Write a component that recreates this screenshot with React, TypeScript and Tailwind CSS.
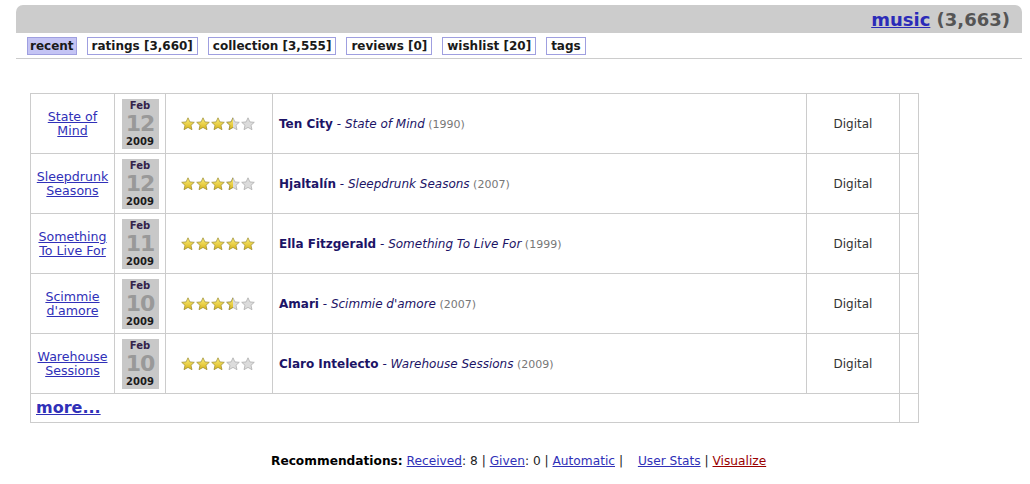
import React from 'react';

type Row = {
  title: string[];
  day: string;
  rating: number;
  artist: string;
  album: string;
  year: string;
};

const rows: Row[] = [
  { title: ['State of', 'Mind'], day: '12', rating: 3.5, artist: 'Ten City', album: 'State of Mind', year: '1990' },
  { title: ['Sleepdrunk', 'Seasons'], day: '12', rating: 3.5, artist: 'Hjaltalín', album: 'Sleepdrunk Seasons', year: '2007' },
  { title: ['Something', 'To Live For'], day: '11', rating: 5, artist: 'Ella Fitzgerald', album: 'Something To Live For', year: '1999' },
  { title: ['Scimmie', "d'amore"], day: '10', rating: 3.5, artist: 'Amari', album: "Scimmie d'amore", year: '2007' },
  { title: ['Warehouse', 'Sessions'], day: '10', rating: 3, artist: 'Claro Intelecto', album: 'Warehouse Sessions', year: '2009' },
];

const tabs = ['recent', 'ratings [3,660]', 'collection [3,555]', 'reviews [0]', 'wishlist [20]', 'tags'];

const STAR = 'M7 0.8 L8.9 4.9 L13.3 5.3 L10 8.3 L11 12.7 L7 10.4 L3 12.7 L4 8.3 L0.7 5.3 L5.1 4.9 Z';

const Star: React.FC<{ fill: 'full' | 'half' | 'empty'; id: string }> = ({ fill, id }) => (
  <svg width="14" height="14" viewBox="0 0 14 14" className="block">
    <defs>
      <linearGradient id={`g-${id}`} x1="0" y1="0" x2="0" y2="1">
        <stop offset="0" stopColor="#fff27a" />
        <stop offset="1" stopColor="#d6b21c" />
      </linearGradient>
      <clipPath id={`c-${id}`}>
        <rect x="0" y="0" width="7" height="14" />
      </clipPath>
    </defs>
    {fill === 'full' ? (
      <path d={STAR} fill={`url(#g-${id})`} stroke="#9a8a2a" strokeWidth="0.7" />
    ) : (
      <>
        <path d={STAR} fill="#dcdcdc" stroke="#a8a8a8" strokeWidth="0.7" />
        {fill === 'half' && (
          <path d={STAR} fill={`url(#g-${id})`} stroke="#9a8a2a" strokeWidth="0.7" clipPath={`url(#c-${id})`} />
        )}
      </>
    )}
  </svg>
);

const Stars: React.FC<{ rating: number; row: number }> = ({ rating, row }) => (
  <div className="flex gap-[1px]">
    {[0, 1, 2, 3, 4].map((i) => {
      const f = rating >= i + 1 ? 'full' : rating >= i + 0.5 ? 'half' : 'empty';
      return <Star key={i} fill={f} id={`${row}-${i}`} />;
    })}
  </div>
);

const App: React.FC = () => {
  return (
    <div className="w-[1030px] h-[484px] bg-white text-[12px] text-[#222]" style={{ fontFamily: '"DejaVu Sans", Verdana, sans-serif' }}>
      {/* header bar */}
      <div className="pt-[5px] pl-[16px] pr-[8px]">
        <div className="h-[28px] bg-[#cccccc] rounded-t-[7px] flex items-end justify-end pr-[12px] pb-[2px]">
          <span className="text-[18px] font-bold text-[#555] leading-[22px]">
            <a href="#" className="text-[#2b2bb8] underline">music</a> (3,663)
          </span>
        </div>
        <div className="flex gap-[10px] pl-[11px] pt-[4px] pb-[3px] border-b border-[#cccccc]">
          {tabs.map((t, i) => (
            <span
              key={t}
              className={`border border-[#9f9fe0] h-[18px] leading-[16px] font-bold text-[12px] text-[#1a1a1a] ${i === 0 ? 'bg-[#c4c4f4] px-[2px]' : 'bg-white px-[4px]'}`}
            >
              {t}
            </span>
          ))}
        </div>
      </div>

      {/* recent table */}
      <div className="pl-[30px] pt-[34px]">
        <table className="w-[889px] border-collapse border border-[#cccccc]">
          <tbody>
            {rows.map((r, idx) => (
              <tr key={idx} className="h-[60px]">
                <td className="w-[84px] border border-[#cccccc] text-center align-middle leading-[14px] text-[12.6px]">
                  <a href="#" className="text-[#3030b8] underline">
                    {r.title[0]}
                    <br />
                    {r.title[1]}
                  </a>
                </td>
                <td className="w-[51px] border border-[#cccccc] align-middle">
                  <div className="mx-auto w-[37px] h-[50px] bg-[#c8c8c8] flex flex-col items-center justify-start pt-[1px]">
                    <span className="text-[10px] font-bold text-[#33224a] leading-[12px]">Feb</span>
                    <span className="text-[22px] font-bold text-[#999999] leading-[24px] tracking-[-1px]">{r.day}</span>
                    <span className="text-[10px] text-[#1a1a1a] leading-[12px] font-bold">2009</span>
                  </div>
                </td>
                <td className="w-[107px] border border-[#cccccc] align-middle pl-[15px]">
                  <Stars rating={r.rating} row={idx} />
                </td>
                <td className="w-[534px] border border-[#cccccc] align-middle pl-[6px] pt-[2px]">
                  <span className="font-bold text-[#1c1466]">{r.artist}</span>
                  <span className="text-[#1c1466]"> - </span>
                  <i className="text-[#1c1466]">{r.album}</i>
                  <span className="text-[11px] text-[#777]"> ({r.year})</span>
                </td>
                <td className="w-[93px] border border-[#cccccc] text-center align-middle text-[#333]">Digital</td>
                <td className="border border-[#cccccc]"></td>
              </tr>
            ))}
            <tr className="h-[29px]">
              <td colSpan={5} className="border-r border-[#cccccc] pl-[5px] align-middle">
                <a href="#" className="text-[16px] font-bold text-[#3030b8] underline">more...</a>
              </td>
              <td></td>
            </tr>
          </tbody>
        </table>
      </div>

      {/* footer */}
      <div className="pt-[29px] pl-[271px] text-[12.2px] text-[#222]">
        <span className="font-bold text-black">Recommendations:</span>{' '}
        <a href="#" className="text-[#3030b8] underline">Received</a>: 8 |{' '}
        <a href="#" className="text-[#3030b8] underline">Given</a>: 0 |{' '}
        <a href="#" className="text-[#3030b8] underline">Automatic</a> |{' '}
        <span className="inline-block w-[11px]" />
        <a href="#" className="text-[#3030b8] underline">User Stats</a> |{' '}
        <a href="#" className="text-[#990000] underline">Visualize</a>
      </div>
    </div>
  );
};

export default App;
